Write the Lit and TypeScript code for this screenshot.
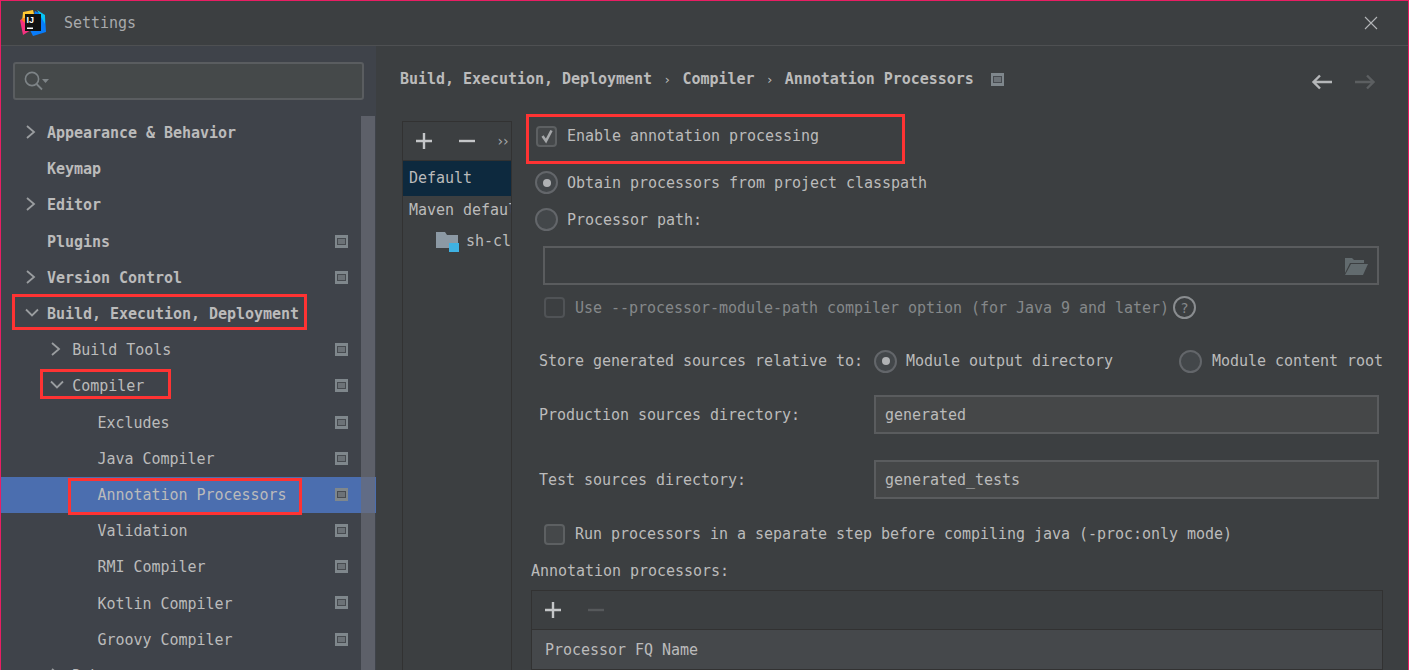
import {LitElement, css, html, svg} from 'lit';
import {customElement} from 'lit/decorators.js';

// sidebar rows: label, indent level, chevron state, bold, project-scope icon
const rows = [
  {label: 'Appearance & Behavior', level: 0, arrow: 'right', bold: true, scoped: false},
  {label: 'Keymap', level: 0, arrow: '', bold: true, scoped: false},
  {label: 'Editor', level: 0, arrow: 'right', bold: true, scoped: false},
  {label: 'Plugins', level: 0, arrow: '', bold: true, scoped: true},
  {label: 'Version Control', level: 0, arrow: 'right', bold: true, scoped: true},
  {label: 'Build, Execution, Deployment', level: 0, arrow: 'down', bold: true, scoped: false},
  {label: 'Build Tools', level: 1, arrow: 'right', bold: false, scoped: true},
  {label: 'Compiler', level: 1, arrow: 'down', bold: false, scoped: true},
  {label: 'Excludes', level: 2, arrow: '', bold: false, scoped: true},
  {label: 'Java Compiler', level: 2, arrow: '', bold: false, scoped: true},
  {label: 'Annotation Processors', level: 2, arrow: '', bold: false, scoped: true, selected: true},
  {label: 'Validation', level: 2, arrow: '', bold: false, scoped: true},
  {label: 'RMI Compiler', level: 2, arrow: '', bold: false, scoped: true},
  {label: 'Kotlin Compiler', level: 2, arrow: '', bold: false, scoped: true},
  {label: 'Groovy Compiler', level: 2, arrow: '', bold: false, scoped: true},
  {label: 'Debugger', level: 1, arrow: 'right', bold: false, scoped: false},
];

const chevron = (dir: string) =>
  html`<svg width="14" height="14" viewBox="0 0 14 14">
    ${dir === 'right'
      ? svg`<path d="M3 1 L10 7 L3 13" fill="none" stroke="#9a9da0" stroke-width="1.8"/>`
      : svg`<path d="M1 3.5 L7 9.5 L13 3.5" fill="none" stroke="#9a9da0" stroke-width="1.8"/>`}
  </svg>`;

const scopeIcon = html`<svg width="13" height="13" viewBox="0 0 13 13">
  <rect width="13" height="13" fill="#7f878c"/>
  <rect x="2" y="3" width="9" height="7" fill="#474b50"/>
  <rect x="3" y="4" width="7" height="5" fill="#6c7277"/>
</svg>`;

const plus = (color = '#c4c6c8') =>
  html`<svg width="16" height="16" viewBox="0 0 16 16"><path d="M8 0V16M0 8H16" stroke=${color} stroke-width="2.4"/></svg>`;

const minus = (color = '#c4c6c8') =>
  html`<svg width="16" height="16" viewBox="0 0 16 16"><path d="M0 8H16" stroke=${color} stroke-width="2.4"/></svg>`;

const check = html`<svg width="18" height="18" viewBox="0 0 18 18">
  <path d="M4.5 9 L8 14 L13.5 3.5" fill="none" stroke="#a6a8aa" stroke-width="2.6"/>
</svg>`;

@customElement('app-root')
export class AppRoot extends LitElement {
  static override styles = css`
    :host {
      display: block;
      position: relative;
      width: 1409px;
      height: 670px;
      overflow: hidden;
      box-sizing: border-box;
      background: #3c3f41;
      border: 1px solid #e91e63;
      border-bottom: 0;
      font-family: 'DejaVu Sans Mono', monospace;
      font-size: 15px;
      letter-spacing: -0.03px;
      color: #bbbbbb;
    }
    svg {
      display: block;
      flex: none;
    }
    .titlebar {
      height: 44px;
      display: flex;
      align-items: center;
      border-bottom: 1px solid #4e5052;
      padding-left: 19px;
      box-sizing: content-box;
    }
    .title {
      margin-left: 17px;
      color: #a8aaac;
    }
    .close {
      margin-left: auto;
      margin-right: 30px;
    }
    .body {
      display: flex;
      height: 624px;
    }
    .sidebar {
      width: 375px;
      flex: none;
      position: relative;
      background: #3f434a;
      overflow: hidden;
    }
    .search {
      margin: 16px 12px 0 12px;
      height: 38px;
      box-sizing: border-box;
      width: 351px;
      background: #45494a;
      border: 2px solid #5a5d60;
      border-radius: 3px;
      display: flex;
      align-items: center;
      padding-left: 9px;
    }
    .tree {
      margin-top: 15px;
    }
    .row {
      height: 36.2px;
      display: flex;
      align-items: center;
      position: relative;
    }
    .row.selected {
      background: #4b6eaf;
    }
    .chev {
      position: absolute;
      top: 10px;
    }
    .label {
      white-space: pre;
    }
    .row.bold .label {
      font-weight: bold;
    }
    .scope {
      position: absolute;
      left: 334px;
      top: 11px;
    }
    .scrollbar {
      position: absolute;
      left: 360px;
      top: 70px;
      bottom: 0;
      width: 14px;
      background: rgba(105, 108, 118, 0.72);
    }
    .main {
      flex: 1;
      min-width: 0;
      display: flex;
      flex-direction: column;
    }
    .crumbs {
      height: 66px;
      display: flex;
      align-items: center;
      padding-left: 24px;
      box-sizing: border-box;
    }
    .trail {
      font-weight: bold;
      white-space: pre;
    }
    .sep {
      font-weight: normal;
      margin: 0 11.3px;
      font-size: 13px;
    }
    .crumb-scope {
      margin-left: 17px;
    }
    .nav {
      margin-left: auto;
      display: flex;
      gap: 21px;
      margin-right: 32px;
      margin-top: 6px;
    }
    .split {
      flex: 1;
      display: flex;
      min-height: 0;
      padding-top: 9px;
    }
    .profiles {
      width: 110px;
      margin-left: 26px;
      margin-top: 0;
      flex: none;
      border: 1px solid #323232;
      border-bottom: 0;
      box-sizing: border-box;
      overflow: hidden;
    }
    .tools {
      height: 39px;
      display: flex;
      align-items: center;
      gap: 27px;
      padding-left: 13px;
      border-bottom: 1px solid #323232;
      box-sizing: border-box;
    }
    .more {
      font-size: 14px;
      letter-spacing: -3px;
      margin-left: -6px;
      color: #a5a7a9;
    }
    .profile {
      height: 31px;
      line-height: 31px;
      padding-left: 6px;
      white-space: nowrap;
      margin-top: -1px;
    }
    .profile.active {
      background: #0d293e;
      height: 35px;
      line-height: 35px;
      margin-top: 0;
    }
    .profile.module {
      display: flex;
      align-items: center;
      gap: 7px;
      padding-left: 33px;
      margin-top: 0;
    }
    .form {
      flex: 1;
      min-width: 0;
      padding-left: 16px;
      margin-top: -5px;
      display: flex;
      flex-direction: column;
      overflow: hidden;
    }
    .line {
      display: flex;
      align-items: center;
      white-space: pre;
      flex: none;
    }
    .gap-label {
      margin-left: 10px;
    }
    .box {
      width: 21px;
      height: 21px;
      box-sizing: border-box;
      border: 2px solid #5d6062;
      border-radius: 4px;
      background: #45484a;
      display: flex;
      align-items: center;
      justify-content: center;
      flex: none;
    }
    .box.off {
      border-color: #505356;
      background: #3c3f41;
    }
    .radio {
      width: 23px;
      height: 23px;
      box-sizing: border-box;
      border: 2px solid #63666a;
      border-radius: 50%;
      background: #43474a;
      display: flex;
      align-items: center;
      justify-content: center;
      flex: none;
    }
    .radio i {
      width: 8px;
      height: 8px;
      border-radius: 50%;
      background: #b0b2b4;
    }
    .radio + .gap-label {
      margin-left: 9px;
    }
    .dim {
      color: #85888a;
    }
    .field {
      height: 39px;
      box-sizing: border-box;
      background: #454748;
      border: 2px solid #5a5c5e;
      display: flex;
      align-items: center;
      padding-left: 9px;
      flex: none;
    }
    .field.plain {
      background: #3c3f41;
      justify-content: flex-end;
      padding-right: 9px;
    }
    .help {
      width: 23px;
      height: 23px;
      border: 2px solid #8a8d90;
      border-radius: 50%;
      box-sizing: border-box;
      display: flex;
      align-items: center;
      justify-content: center;
      font-size: 14px;
      margin-left: 4px;
    }
    .fq {
      margin-left: 3px;
      margin-top: 1px;
      width: 852px;
      border: 1px solid #323232;
      border-bottom: 0;
      box-sizing: border-box;
      flex: none;
    }
    .fq-tools {
      height: 39px;
      display: flex;
      align-items: center;
      gap: 27px;
      padding-left: 13px;
      border-bottom: 1px solid #323232;
      box-sizing: border-box;
    }
    .fq-head {
      height: 39px;
      display: flex;
      align-items: center;
      padding-left: 13px;
      background: #45484b;
      border-bottom: 1px solid #323232;
    }
    .mark {
      position: absolute;
      border: 3px solid #ff3333;
      box-sizing: border-box;
      pointer-events: none;
    }
    .mark.enable { left: 525px; top: 113px; width: 379px; height: 50px; }
    .mark.build { left: 11px; top: 293px; width: 295px; height: 36px; }
    .mark.compiler { left: 39px; top: 368px; width: 131px; height: 30px; }
    .mark.processors { left: 67px; top: 477px; width: 234px; height: 37px; }
  `;

  override render() {
    return html`
      <div class="titlebar">
        <svg width="27" height="27" viewBox="0 0 27 27">
          <path d="M3 2 L13 0 L15 8 L2 12Z" fill="#ffc832"/>
          <path d="M0 10 L8 7 L11 20 L3 25 Z" fill="#f5317f"/>
          <path d="M15 1 L25 6 L26 22 L13 26 L10 20 Z" fill="#087cfa"/>
          <path d="M17 0 L25 5 L25 14 Z" fill="#07c3f2"/>
          <path d="M1 9 L7 7 L7 15 Z" fill="#fc801d"/>
          <rect x="5" y="4" width="16" height="17" fill="#111"/>
          <text x="6.5" y="12.5" font-size="9" font-weight="bold" font-family="Liberation Sans" fill="#fff">IJ</text>
          <rect x="7" y="17.5" width="6" height="1.5" fill="#fff"/>
        </svg>
        <span class="title">Settings</span>
        <svg class="close" width="14" height="14" viewBox="0 0 14 14">
          <path d="M1 1L13 13M13 1L1 13" stroke="#b4b6b8" stroke-width="1.1"/>
        </svg>
      </div>
      <div class="body">
        <div class="sidebar">
          <div class="search">
            <svg width="26" height="22" viewBox="0 0 26 22">
              <circle cx="8" cy="9" r="6.6" fill="none" stroke="#7e8487" stroke-width="1.6"/>
              <path d="M12.5 14 L18 19.5" stroke="#7e8487" stroke-width="1.8"/>
              <path d="M18 9H25L21.5 13Z" fill="#7e8487"/>
            </svg>
          </div>
          <div class="tree">
            ${rows.map(
              (r) => html`
                <div class="row ${r.bold ? 'bold' : ''} ${r.selected ? 'selected' : ''}">
                  ${r.arrow
                    ? html`<span class="chev" style="left:${(r.arrow === 'down' ? 24 : 23) + r.level * 25}px">${chevron(r.arrow)}</span>`
                    : ''}
                  <span class="label" style="margin-left:${46 + r.level * 25.2}px">${r.label}</span>
                  ${r.scoped ? html`<span class="scope">${scopeIcon}</span>` : ''}
                </div>
              `,
            )}
          </div>
          <div class="scrollbar"></div>
        </div>
        <div class="main">
          <div class="crumbs">
            <span class="trail">Build, Execution, Deployment<span class="sep">›</span>Compiler<span class="sep">›</span>Annotation Processors</span>
            <span class="crumb-scope">${scopeIcon}</span>
            <div class="nav">
              <svg width="22" height="16" viewBox="0 0 22 16">
                <path d="M21 8H3M9 1.5L2.5 8L9 14.5" fill="none" stroke="#b5b7b9" stroke-width="2.4"/>
              </svg>
              <svg width="22" height="16" viewBox="0 0 22 16">
                <path d="M1 8H19M13 1.5L19.5 8L13 14.5" fill="none" stroke="#5c5f61" stroke-width="2.4"/>
              </svg>
            </div>
          </div>
          <div class="split">
            <div class="profiles">
              <div class="tools">
                ${plus()} ${minus()}
                <span class="more">››</span>
              </div>
              <div class="profile active">Default</div>
              <div class="profile">Maven default annotation processors</div>
              <div class="profile module">
                <svg width="23" height="21" viewBox="0 0 23 21">
                  <path d="M0 1H9L11 4H22V17H0Z" fill="#8c99a4"/>
                  <rect x="13" y="12" width="10" height="9" fill="#3fb2e3"/>
                </svg>
                sh-cloud
              </div>
            </div>
            <div class="form">
              <div class="line" style="height:40px;padding-left:8px">
                <span class="box">${check}</span><span class="gap-label">Enable annotation processing</span>
              </div>
              <div class="line" style="height:37px;margin-top:8px;padding-left:7px">
                <span class="radio"><i></i></span><span class="gap-label">Obtain processors from project classpath</span>
              </div>
              <div class="line" style="height:37px;padding-left:7px">
                <span class="radio"></span><span class="gap-label">Processor path:</span>
              </div>
              <div class="field plain" style="width:836px;margin:8px 0 -1px 15px">
                <svg width="24" height="18" viewBox="0 0 24 18">
                  <path d="M1 16V1H8L10 3H20V6H6L1 16Z" fill="#626b6e"/>
                  <path d="M7 7H24L19 18H1Z" fill="#626b6e"/>
                </svg>
              </div>
              <div class="line dim" style="height:37px;margin-top:5px;padding-left:16px">
                <span class="box off"></span><span class="gap-label" style="margin-left:10px">Use --processor-module-path compiler option (for Java 9 and later)</span><span class="help">?</span>
              </div>
              <div class="line" style="height:30px;margin-top:20px;padding-left:11px">
                <span>Store generated sources relative to:</span>
                <span class="radio" style="margin-left:11px"><i></i></span><span class="gap-label">Module output directory</span>
                <span class="radio" style="margin-left:66px"></span><span class="gap-label" style="margin-left:10px">Module content root</span>
              </div>
              <div class="line" style="height:39px;margin-top:19px;padding-left:11px">
                <span style="width:335px">Production sources directory:</span>
                <div class="field" style="width:505px">generated</div>
              </div>
              <div class="line" style="height:39px;margin-top:26px;padding-left:11px">
                <span style="width:335px">Test sources directory:</span>
                <div class="field" style="width:505px">generated_tests</div>
              </div>
              <div class="line" style="height:36px;margin-top:17px;padding-left:16px">
                <span class="box"></span><span class="gap-label">Run processors in a separate step before compiling java (-proc:only mode)</span>
              </div>
              <div class="line" style="height:36px;margin-top:1px;margin-left:3px">Annotation processors:</div>
              <div class="fq">
                <div class="fq-tools">${plus()} ${minus('#56595b')}</div>
                <div class="fq-head">Processor FQ Name</div>
              </div>
            </div>
          </div>
        </div>
      </div>
      <div class="mark enable"></div>
      <div class="mark build"></div>
      <div class="mark compiler"></div>
      <div class="mark processors"></div>
    `;
  }
}

declare global {
  interface HTMLElementTagNameMap {
    'app-root': AppRoot;
  }
}
